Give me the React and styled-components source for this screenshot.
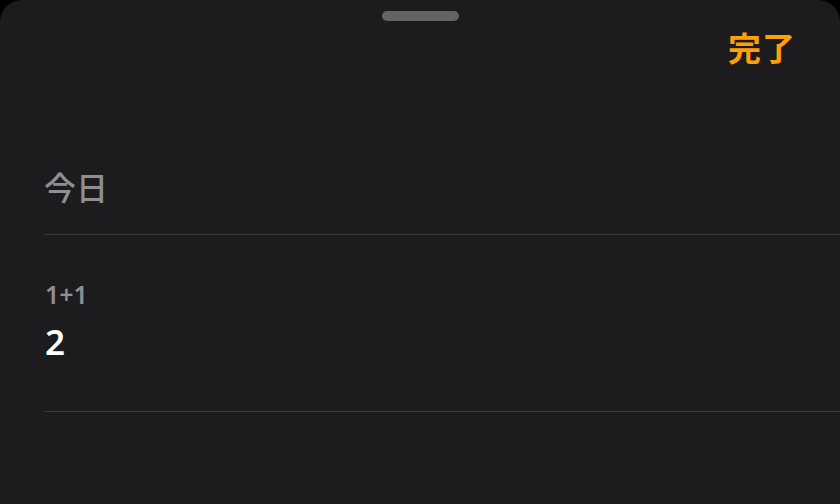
import React from 'react';
import styled, { createGlobalStyle } from 'styled-components';

const GlobalStyle = createGlobalStyle`
  html, body {
    margin: 0;
    padding: 0;
    background: #000;
  }
  body {
    font-family: "Noto Sans CJK JP", "Noto Sans", sans-serif;
    -webkit-font-smoothing: antialiased;
  }
`;

const Sheet = styled.div`
  width: 840px;
  height: 504px;
  background: #1c1c1e;
  border-radius: 22px 22px 0 0;
  box-sizing: border-box;
  display: flex;
  flex-direction: column;
  overflow: hidden;
`;

const Grabber = styled.div`
  align-self: center;
  width: 77px;
  height: 10px;
  margin-top: 11px;
  border-radius: 5px;
  background: #636366;
`;

const TopBar = styled.div`
  display: flex;
  justify-content: flex-end;
  padding: 6px 44px 0 0;
  height: 40px;
`;

const DoneButton = styled.button`
  background: none;
  border: none;
  padding: 0;
  color: #ff9f0a;
  font-family: "Noto Sans CJK JP", sans-serif;
  font-size: 33px;
  font-weight: 700;
  line-height: 40px;
  letter-spacing: 1px;
  cursor: pointer;
`;

const List = styled.div`
  display: flex;
  flex-direction: column;
  padding-left: 44px;
  margin-top: 99px;
`;

const SectionHeader = styled.div`
  color: #8e8e93;
  font-size: 32px;
  font-weight: 500;
  line-height: 40px;
  height: 68px;
  border-bottom: 1px solid #38383a;
`;

const Entry = styled.div`
  display: flex;
  flex-direction: column;
  height: 177px;
  box-sizing: border-box;
  padding: 44px 0 0 1px;
  border-bottom: 1px solid #38383a;
`;

const Expression = styled.div`
  color: #8e8e93;
  font-family: "Noto Sans", sans-serif;
  font-size: 25px;
  font-weight: 600;
  line-height: 30px;
`;

const Result = styled.div`
  color: #fff;
  font-family: "Noto Sans", sans-serif;
  font-size: 35px;
  font-weight: 600;
  line-height: 40px;
  margin-top: 13px;
`;

export default function App() {
  return (
    <>
      <GlobalStyle />
      <Sheet>
        <Grabber />
        <TopBar>
          <DoneButton>完了</DoneButton>
        </TopBar>
        <List>
          <SectionHeader>今日</SectionHeader>
          <Entry>
            <Expression>1+1</Expression>
            <Result>2</Result>
          </Entry>
        </List>
      </Sheet>
    </>
  );
}
